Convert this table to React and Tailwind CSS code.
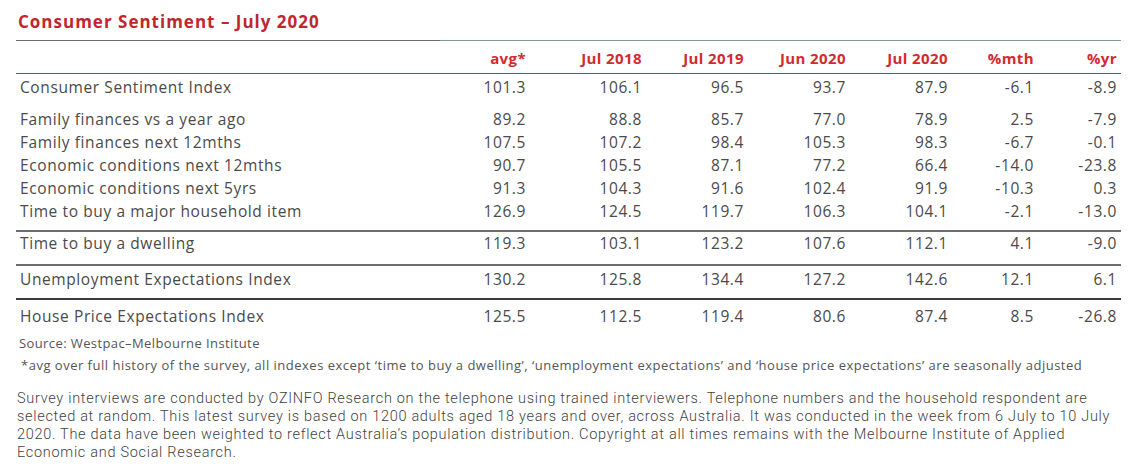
import React from 'react';

const rows = [
  { label: 'Consumer Sentiment Index', values: ['101.3', '106.1', '96.5', '93.7', '87.9', '-6.1', '-8.9'] },
];

const components = [
  { label: 'Family finances vs a year ago', values: ['89.2', '88.8', '85.7', '77.0', '78.9', '2.5', '-7.9'] },
  { label: 'Family finances next 12mths', values: ['107.5', '107.2', '98.4', '105.3', '98.3', '-6.7', '-0.1'] },
  { label: 'Economic conditions next 12mths', values: ['90.7', '105.5', '87.1', '77.2', '66.4', '-14.0', '-23.8'] },
  { label: 'Economic conditions next 5yrs', values: ['91.3', '104.3', '91.6', '102.4', '91.9', '-10.3', '0.3'] },
  { label: 'Time to buy a major household item', values: ['126.9', '124.5', '119.7', '106.3', '104.1', '-2.1', '-13.0'] },
];

const headers = ['avg*', 'Jul 2018', 'Jul 2019', 'Jun 2020', 'Jul 2020', '%mth', '%yr'];

const cols = 'grid grid-cols-[414px_96px_116px_102px_102px_102px_86px_87px]';

const Row = ({ label, values, className = '' }) => (
  <div className={`${cols} items-center ${className}`}>
    <div className="pl-1">{label}</div>
    {values.map((v, i) => (
      <div key={i} className={`text-right ${i === values.length - 1 ? 'pr-1' : ''}`}>
        {v}
      </div>
    ))}
  </div>
);

export default function App() {
  return (
    <div
      className="w-[1131px] h-[470px] bg-white text-[#4a4a4a] px-4"
      style={{ fontFamily: '"Open Sans", "DejaVu Sans", sans-serif' }}
    >
      <div className="w-[1105px]">
        <h1 className="h-[40px] pt-[10px] pl-[2px] text-[17px] leading-[24px] font-bold tracking-[1px] text-[#c0272d]">
          Consumer Sentiment – July 2020
        </h1>

        <div className="flex h-px">
          <div className="w-[424px] bg-[#6b6b6b]" />
          <div className="flex-1 bg-[#7f9a9a]" />
        </div>

        {/* header */}
        <div className={`${cols} h-[32px] items-end pb-[4px] text-[15px] font-bold tracking-[0.4px] text-[#d42a2f]`}>
          <div />
          {headers.map((h, i) => (
            <div key={h} className={`text-right ${i === headers.length - 1 ? 'pr-1' : ''}`}>
              {h}
            </div>
          ))}
        </div>
        <div className="h-px bg-[#4f6464]" />

        <div className="text-[15.5px] leading-[23px] tracking-[0.6px]">
          {rows.map((r) => (
            <Row key={r.label} {...r} className="h-[27px]" />
          ))}

          <div className="h-[7px]" />
          {components.map((r) => (
            <Row key={r.label} {...r} className="h-[23px]" />
          ))}

          <div className="h-[7px]" />
          <div className="h-[2px] bg-[#6e6e6e]" />
          <Row label="Time to buy a dwelling" values={['119.3', '103.1', '123.2', '107.6', '112.1', '4.1', '-9.0']} className="h-[32px] pb-[10px]" />
          <div className="h-[2px] bg-[#6e6e6e]" />
          <Row label="Unemployment Expectations Index" values={['130.2', '125.8', '134.4', '127.2', '142.6', '12.1', '6.1']} className="h-[32px] pb-[6px]" />
          <div className="h-[2px] bg-[#3c3c3c]" />
          <Row label="House Price Expectations Index" values={['125.5', '112.5', '119.4', '80.6', '87.4', '8.5', '-26.8']} className="h-[32px] pt-[1px]" />
        </div>

        <div className="text-[13px] leading-[22px] tracking-[0.4px] pl-[3px] text-[#555]">
          <p>Source: Westpac–Melbourne Institute</p>
          <p className="pl-[2px] tracking-[0.5px]">
            *avg over full history of the survey, all indexes except ‘time to buy a dwelling’, ‘unemployment expectations’ and ‘house price expectations’ are seasonally adjusted
          </p>
        </div>

        <p
          className="mt-[14px] text-[14.5px] leading-[18px] font-light tracking-[0.7px] text-[#3f3f3f] pl-[1px] w-[1108px]"
          style={{ fontFamily: '"Roboto", sans-serif' }}
        >
          Survey interviews are conducted by OZINFO Research on the telephone using trained interviewers. Telephone numbers and the household respondent are selected at random. This latest survey is based on 1200 adults aged 18 years and over, across Australia. It was conducted in the week from 6 July to 10 July 2020. The data have been weighted to reflect Australia’s population distribution. Copyright at all times remains with the Melbourne Institute of Applied Economic and Social Research.
        </p>
      </div>
    </div>
  );
}
